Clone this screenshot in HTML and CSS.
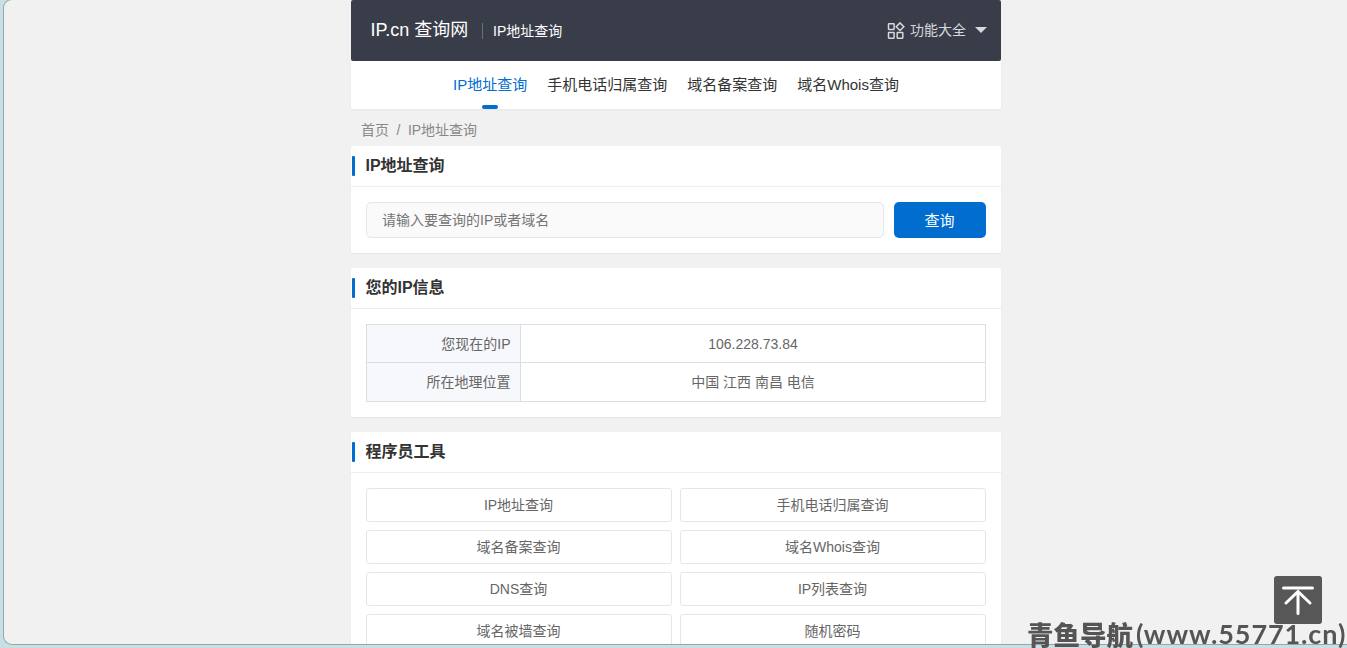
FILE: index.html
```html
<!DOCTYPE html>
<html lang="zh-CN">
<head>
    <meta charset="utf-8" />
    <meta name="viewport" content="width=device-width" />
    <title>IP地址查询 - IP.cn 查询网</title>
    <link rel="stylesheet" href="styles.css">
</head>
<body>
    <div class="window">
        <div class="container">
            <header class="header">
                <a class="logo">IP.cn 查询网</a>
                <span class="subtitle">IP地址查询</span>
                <div class="menu">
                    <svg class="menu-icon" width="18" height="18" viewBox="0 0 18 18" fill="none" stroke="currentColor" stroke-width="1.5">
                        <rect x="1.5" y="1.8" width="5.6" height="5.6" rx=".4" />
                        <path d="M13 .9l3.8 3.8-3.8 3.8-3.8-3.8z" />
                        <rect x="1.5" y="10.6" width="5.6" height="5.6" rx=".4" />
                        <rect x="10.2" y="10.6" width="5.6" height="5.6" rx=".4" />
                    </svg>
                    <span class="menu-text">功能大全</span>
                    <i class="caret"></i>
                </div>
            </header>

            <nav class="nav">
                <a class="nav-item active">IP地址查询</a>
                <a class="nav-item">手机电话归属查询</a>
                <a class="nav-item">域名备案查询</a>
                <a class="nav-item">域名Whois查询</a>
            </nav>

            <div class="breadcrumb">
                <a>首页</a><span class="slash">/</span><span>IP地址查询</span>
            </div>

            <section class="card">
                <h2 class="card-title">IP地址查询</h2>
                <form class="card-body search">
                    <input class="search-input" type="text" placeholder="请输入要查询的IP或者域名" />
                    <button class="search-btn" type="button">查询</button>
                </form>
            </section>

            <section class="card">
                <h2 class="card-title">您的IP信息</h2>
                <div class="card-body">
                    <table class="info">
                        <tr class="row-ip">
                            <th>您现在的IP</th>
                            <td>106.228.73.84</td>
                        </tr>
                        <tr class="row-place">
                            <th>所在地理位置</th>
                            <td>中国 江西 南昌 电信</td>
                        </tr>
                    </table>
                </div>
            </section>

            <section class="card">
                <h2 class="card-title">程序员工具</h2>
                <div class="card-body tools">
                    <a class="tool">IP地址查询</a>
                    <a class="tool">手机电话归属查询</a>
                    <a class="tool">域名备案查询</a>
                    <a class="tool">域名Whois查询</a>
                    <a class="tool">DNS查询</a>
                    <a class="tool">IP列表查询</a>
                    <a class="tool">域名被墙查询</a>
                    <a class="tool">随机密码</a>
                </div>
            </section>
        </div>
    </div>

    <a class="to-top">
        <svg width="48" height="48" viewBox="0 0 48 48" fill="none" stroke="#fff" stroke-width="3" stroke-linecap="round">
            <path d="M9.5 12h29M24 16v21.5M12 27l12-11.5 12 11.5" />
        </svg>
    </a>
    <div class="watermark"><span class="mark-name">青鱼导航</span><span class="mark-url">(www.55771.cn)</span></div>
</body>
</html>
```

FILE: styles.css
```css
* {
  box-sizing: border-box;
}

body {
  margin: 0;
  height: 648px;
  overflow: hidden;
  background: #c9dfe3;
  color: #333;
  font: 14px/20px "Liberation Sans", "Noto Sans CJK SC", sans-serif;
}

.window {
  height: 646px;
  margin: -1px 0 0 3px;
  overflow: hidden;
  border: 1px solid #8fa9ad;
  border-right: 0;
  border-radius: 9px 0 0 9px;
  background: #f1f1f1;
}

.container {
  width: 650px;
  margin-left: 347px;
}

/* header */
.header {
  display: flex;
  align-items: center;
  height: 61px;
  padding: 0 14px 0 19.5px;
  border-radius: 2px;
  background: #393d49;
  color: #fff;
}

.logo {
  width: 111.5px;
  padding-bottom: 2px;
  font-size: 18px;
  white-space: nowrap;
}

.subtitle {
  height: 16px;
  padding-left: 10px;
  border-left: 1px solid #6b6e77;
  line-height: 16px;
}

.menu {
  display: flex;
  align-items: center;
  margin-left: auto;
  color: #d7d8db;
}

.menu-icon {
  margin-right: 5px;
}

.menu-text {
  padding-bottom: 2px;
}

.caret {
  margin: 0 0 1px 9px;
  border: 6px solid transparent;
  border-top-color: #d7d8db;
  border-bottom: 0;
}

.nav {
  display: flex;
  justify-content: center;
  gap: 20px;
  height: 48px;
  background: #fff;
  box-shadow: 0 1px 2px rgba(0, 0, 0, 0.05);
  font-size: 15px;
  line-height: 48px;
}

.nav-item {
  position: relative;
}

.nav-item.active {
  color: #006dcf;
}

.nav-item.active::after {
  content: "";
  position: absolute;
  left: 50%;
  bottom: 0;
  width: 16px;
  height: 4px;
  margin-left: -8px;
  border-radius: 2px;
  background: #006dcf;
}

.breadcrumb {
  height: 37px;
  padding-left: 10px;
  color: #888;
  line-height: 43px;
}

.slash {
  margin: 0 7.5px;
}

/* cards */
.card {
  margin-bottom: 15px;
  border-radius: 2px;
  background: #fff;
  box-shadow: 0 1px 2px rgba(0, 0, 0, 0.05);
}

.card-title {
  display: flex;
  height: 41px;
  margin: 0;
  padding: 10px 0 0 1px;
  border-bottom: 1px solid #eee;
  font-size: 16px;
  line-height: 20px;
}

.card-title::before {
  content: "";
  width: 3px;
  height: 20px;
  margin-right: 10.5px;
  border-radius: 1px;
  background: #006dcf;
}

.card-body {
  padding: 15px;
}

.search {
  display: flex;
  gap: 10px;
}

.search-input {
  flex: 1;
  height: 36px;
  padding: 0 15px;
  border: 1px solid #e6e6e6;
  border-radius: 5px;
  background: #fafafa;
  font: inherit;
}

.search-input::placeholder {
  color: #757575;
}

.search-btn {
  width: 92px;
  height: 36px;
  padding: 2px 1px 0 0;
  border: 0;
  border-radius: 5px;
  background: #006dcf;
  color: #fff;
  font: inherit;
  font-size: 15px;
}

.info {
  width: 100%;
  border-collapse: collapse;
  table-layout: fixed;
  color: #666;
}

.info th,
.info td {
  padding: 0;
  border: 1px solid #dcdfe2;
  font-weight: normal;
  text-align: center;
}

.info th {
  width: 154px;
  padding-right: 9.5px;
  background: #f6f8fb;
  text-align: right;
}

.row-ip {
  height: 38px;
}

.row-place {
  height: 39px;
}

.tools {
  display: grid;
  grid-template-columns: 1fr 1fr;
  gap: 8px;
}

.tool {
  height: 34px;
  padding-right: 1px;
  border: 1px solid #e6e6e6;
  border-radius: 3px;
  color: #666;
  line-height: 32px;
  text-align: center;
}

/* floating */
.to-top {
  position: fixed;
  left: 1274px;
  top: 576px;
  width: 48px;
  height: 48px;
  border-radius: 3px;
  background: #575757;
}

.watermark {
  position: fixed;
  left: 1027px;
  top: 620px;
  display: flex;
  color: #555;
  font-weight: bold;
  line-height: 28px;
  white-space: nowrap;
}

.mark-name {
  width: 109px;
  font-family: "Noto Sans CJK SC", sans-serif;
  font-size: 26.5px;
  font-weight: 900;
}

.mark-url {
  font-family: Lato, sans-serif;
  font-size: 27px;
  letter-spacing: 0.9px;
}
```
